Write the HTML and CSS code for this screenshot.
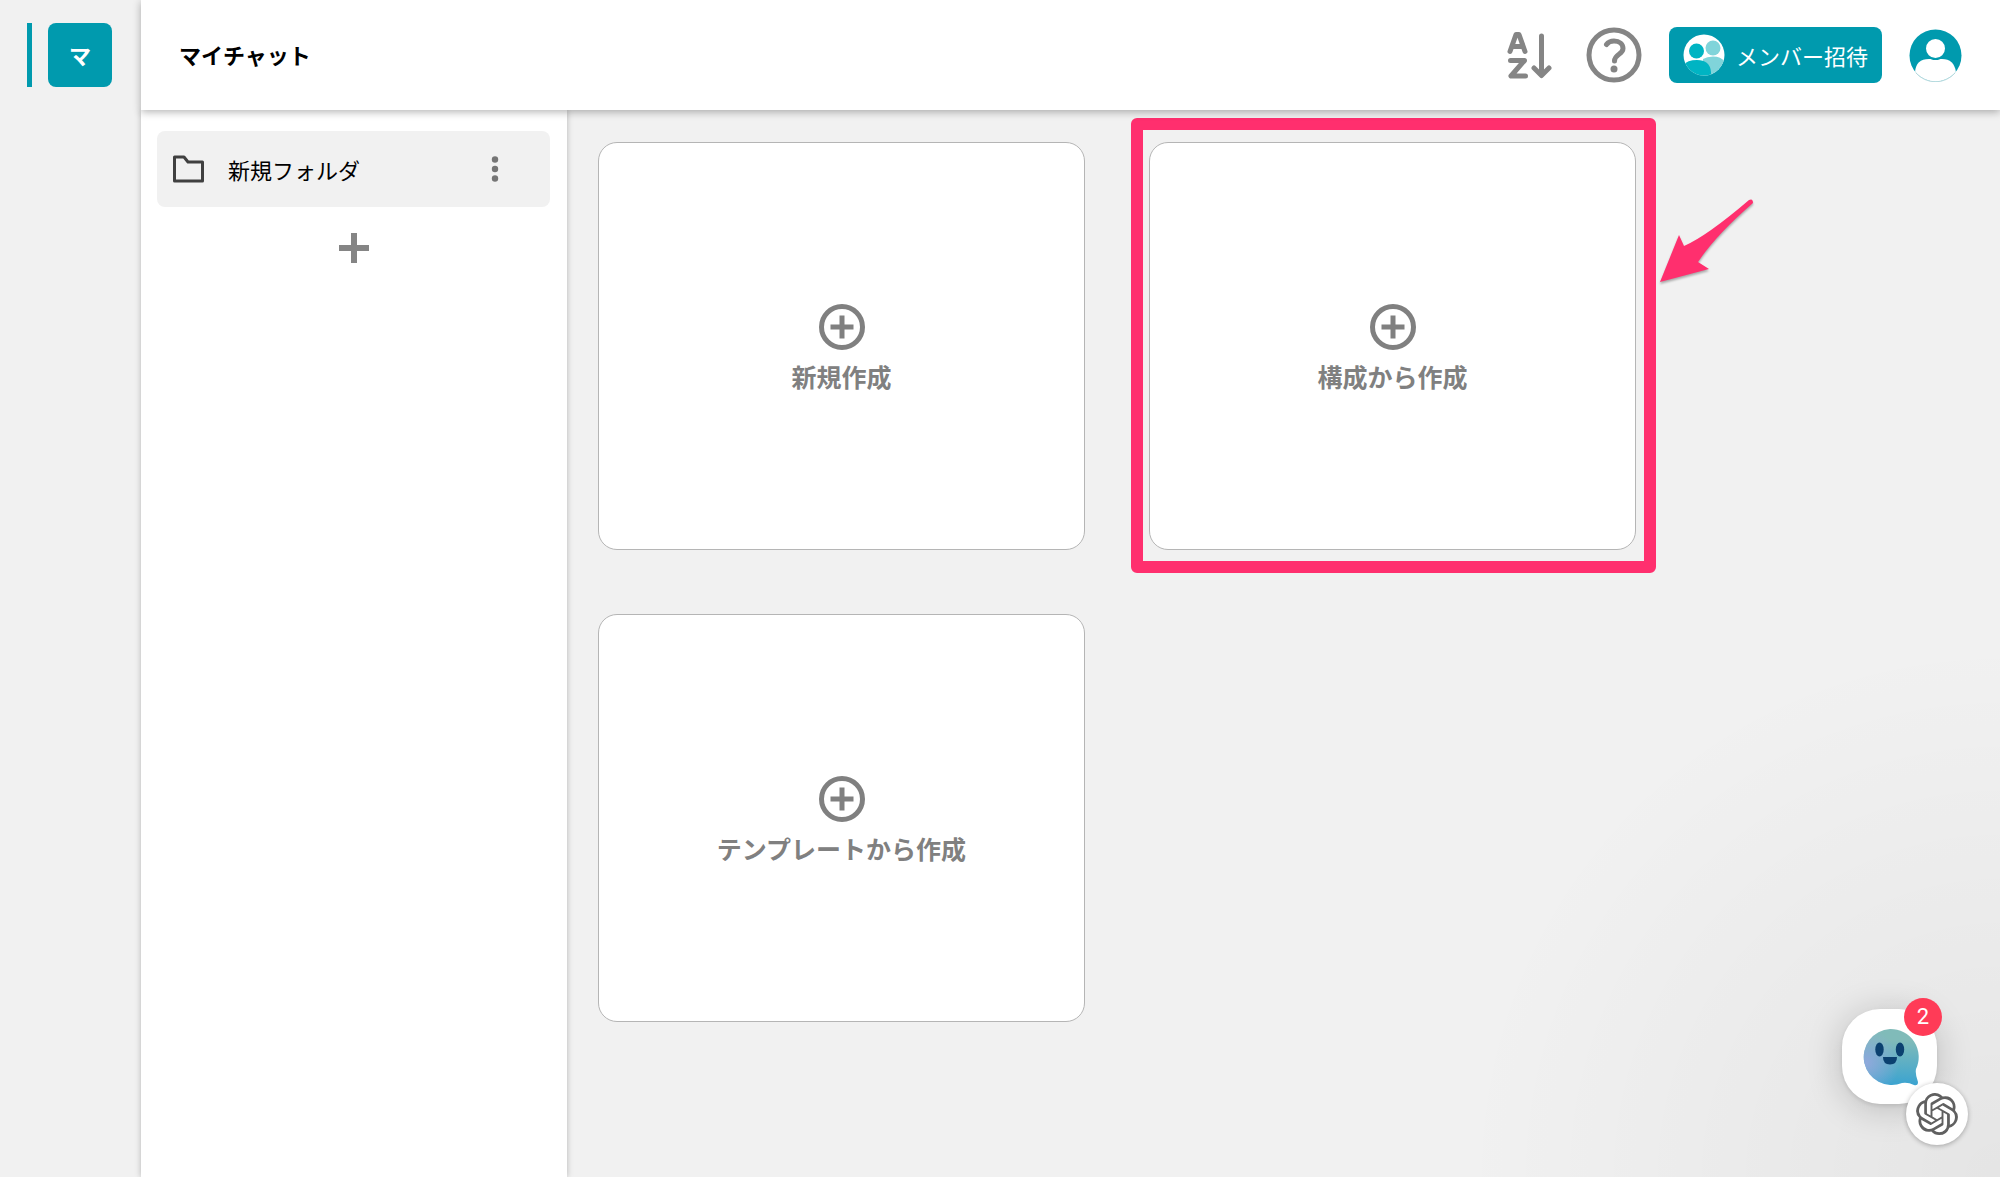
FILE: index.html
```html
<!DOCTYPE html>
<html lang="ja">
<head>
    <meta charset="UTF-8">
    <meta name="viewport" content="width=device-width, initial-scale=1.0">
    <title>マイチャット</title>
    <link rel="stylesheet" href="styles.css">
</head>
<body>
    <nav class="rail">
        <span class="rail-bar"></span>
        <a class="team" href="#">マ</a>
    </nav>
    <div class="page">
        <header class="header">
            <h1>マイチャット</h1>
            <div class="tools">
                <button class="icon-btn" aria-label="並び替え">
                    <svg width="45" height="48" viewBox="0 0 45 48" fill="none" stroke="#858585" stroke-width="5" stroke-linecap="round" stroke-linejoin="round">
                        <path d="M3 20.500L9 3.500h3L18 20.500M6 15.500h9"/>
                        <path d="M3.500 29.500H17.500L4 45H18.500"/>
                        <path d="M34.500 5V44M27 37L34.500 44.500L42 37"/>
                    </svg>
                </button>
                <button class="icon-btn help" aria-label="ヘルプ">
                    <svg width="56" height="56" viewBox="0 0 56 56" fill="none" stroke="#858585" stroke-width="5" stroke-linecap="round">
                        <circle cx="28" cy="28" r="25"/>
                        <path d="M20.500 17.500Q23 14 28 14C33.500 14 37 17 37 21.500C37 27.500 28.500 27 28.500 34"/>
                        <circle cx="28" cy="42" r="3.500" fill="#858585" stroke="none"/>
                    </svg>
                </button>
                <button class="invite">
                    <svg width="42" height="42" viewBox="0 0 42 42">
                        <clipPath id="round"><circle cx="21" cy="21" r="20.500"/></clipPath>
                        <circle cx="21" cy="21" r="20.500" fill="#fff"/>
                        <g clip-path="url(#round)">
                            <circle cx="30" cy="14" r="7.500" fill="#80d4da"/>
                            <path d="M20 25Q24 22.500 30 22.500Q40 22.500 44 31V42H20z" fill="#80d4da"/>
                            <path d="M-1 33Q3 26 14 26Q27 26 28 38V42H-1z" fill="#00b4c3"/>
                            <circle cx="13.500" cy="17" r="9" fill="#fff"/>
                            <circle cx="13.500" cy="17" r="7.500" fill="#00b4c3"/>
                        </g>
                    </svg>
                    メンバー招待
                </button>
                <button class="icon-btn" aria-label="アカウント">
                    <svg width="53" height="53" viewBox="0 0 53 53">
                        <clipPath id="face"><circle cx="26.500" cy="26.500" r="26"/></clipPath>
                        <circle cx="26.500" cy="26.500" r="26" fill="#009aae"/>
                        <g clip-path="url(#face)" fill="#fff">
                            <path d="M6 53V43Q7 30 20 30H33Q45 30 47 43V53z"/>
                            <circle cx="26.500" cy="19.500" r="10.500" stroke="#009aae" stroke-width="2"/>
                        </g>
                        <path d="M7 44A26 26 0 0 0 46 44" fill="none" stroke="#b5d9dd"/>
                    </svg>
                </button>
            </div>
        </header>
        <div class="content">
            <aside class="sidebar">
                <div class="folder">
                    <svg width="31" height="28" viewBox="0 0 31 28" fill="none" stroke="#404040" stroke-width="3" stroke-linejoin="round">
                        <path d="M1.500 2H11L15 7H29.500V26H1.500z"/>
                    </svg>
                    <a href="#">新規フォルダ</a>
                    <button class="icon-btn" aria-label="メニュー">
                        <svg width="8" height="28" viewBox="0 0 8 28" fill="#757575">
                            <circle cx="4" cy="4.500" r="3.200"/><circle cx="4" cy="14" r="3.200"/><circle cx="4" cy="23.500" r="3.200"/>
                        </svg>
                    </button>
                </div>
                <button class="icon-btn add" aria-label="フォルダを追加">
                    <svg width="30" height="30" viewBox="0 0 30 30" stroke="#858585" stroke-width="6">
                        <path d="M15 0V30M0 15H30"/>
                    </svg>
                </button>
            </aside>
            <main class="cards">
                <button class="card">
                    <svg width="46" height="46" viewBox="0 0 46 46" fill="none" stroke="#808080" stroke-width="5">
                        <circle cx="23" cy="23" r="20.500"/><path d="M23 11.500V34.500M11.500 23H34.500"/>
                    </svg>
                    新規作成
                </button>
                <div class="pick">
                    <button class="card">
                        <svg width="46" height="46" viewBox="0 0 46 46" fill="none" stroke="#808080" stroke-width="5">
                            <circle cx="23" cy="23" r="20.500"/><path d="M23 11.500V34.500M11.500 23H34.500"/>
                        </svg>
                        構成から作成
                    </button>
                    <svg class="arrow" width="96" height="86" viewBox="0 0 96 86">
                        <path d="M1 83L20 36L25 47Q48 37 90 1Q94 -1 94 4Q57 36 39 63L50 70z" fill="#ff2f6e"/>
                    </svg>
                </div>
                <button class="card">
                    <svg width="46" height="46" viewBox="0 0 46 46" fill="none" stroke="#808080" stroke-width="5">
                        <circle cx="23" cy="23" r="20.500"/><path d="M23 11.500V34.500M11.500 23H34.500"/>
                    </svg>
                    テンプレートから作成
                </button>
            </main>
        </div>
    </div>
    <div class="chat">
        <button class="bot" aria-label="チャット">
            <svg width="58" height="58" viewBox="0 0 58 58">
                <defs>
                    <linearGradient id="sky" x1="0" y1="0" x2="0" y2="1">
                        <stop offset="0.2" stop-color="#80bbb9"/>
                        <stop offset="1" stop-color="#3ba3d0"/>
                    </linearGradient>
                    <radialGradient id="haze" cx="0.05" cy="0.6" r="0.6">
                        <stop offset="0" stop-color="#8fa9dc"/>
                        <stop offset="1" stop-color="#8fa9dc" stop-opacity="0"/>
                    </radialGradient>
                </defs>
                <path d="M29 1A28 28 0 0 1 55 41Q54 46 57 54Q57 58 53 57Q47 54 41 55A28 28 0 1 1 29 1z" fill="url(#sky)"/>
                <path d="M29 1A28 28 0 0 1 55 41Q54 46 57 54Q57 58 53 57Q47 54 41 55A28 28 0 1 1 29 1z" fill="url(#haze)"/>
                <g fill="#0b4170">
                    <ellipse cx="18.500" cy="21.500" rx="4.200" ry="7"/>
                    <ellipse cx="39" cy="21.500" rx="4.200" ry="7"/>
                    <path d="M22 29H36Q36 36.500 29 36.500Q22 36.500 22 29z"/>
                </g>
            </svg>
        </button>
        <span class="badge">2</span>
        <button class="gpt" aria-label="ChatGPT">
            <svg width="42" height="42" viewBox="0 0 24 24" fill="#606060">
                <path d="M22.2819 9.8211a5.9847 5.9847 0 0 0-.5157-4.9108 6.0462 6.0462 0 0 0-6.5098-2.9A6.0651 6.0651 0 0 0 4.9807 4.1818a5.9847 5.9847 0 0 0-3.9977 2.9 6.0462 6.0462 0 0 0 .7427 7.0966 5.98 5.98 0 0 0 .511 4.9107 6.051 6.051 0 0 0 6.5146 2.9001A5.9847 5.9847 0 0 0 13.2599 24a6.0557 6.0557 0 0 0 5.7718-4.2058 5.9894 5.9894 0 0 0 3.9977-2.9001 6.0557 6.0557 0 0 0-.7475-7.0729zm-9.022 12.6081a4.4755 4.4755 0 0 1-2.8764-1.0408l.1419-.0804 4.7783-2.7582a.7948.7948 0 0 0 .3927-.6813v-6.7369l2.02 1.1686a.071.071 0 0 1 .038.0615v5.5826a4.504 4.504 0 0 1-4.4945 4.4944zm-9.6607-4.1254a4.4708 4.4708 0 0 1-.5346-3.0137l.142.0852 4.783 2.7582a.7712.7712 0 0 0 .7806 0l5.8428-3.3685v2.3324a.0804.0804 0 0 1-.0332.0615L9.74 19.9502a4.4992 4.4992 0 0 1-6.1408-1.6464zM2.3408 7.8956a4.485 4.485 0 0 1 2.3655-1.9728V11.6a.7664.7664 0 0 0 .3879.6765l5.8144 3.3543-2.0201 1.1685a.0757.0757 0 0 1-.071 0l-4.8303-2.7865A4.504 4.504 0 0 1 2.3408 7.872zm16.5963 3.8558L13.1038 8.364 15.1192 7.2a.0757.0757 0 0 1 .071 0l4.8303 2.7913a4.4944 4.4944 0 0 1-.6765 8.1042v-5.6772a.79.79 0 0 0-.407-.667zm2.0107-3.0231l-.142-.0852-4.7735-2.7818a.7759.7759 0 0 0-.7854 0L9.409 9.2297V6.8974a.0662.0662 0 0 1 .0284-.0615l4.8303-2.7866a4.4992 4.4992 0 0 1 6.6802 4.66zM8.3065 12.863l-2.02-1.1638a.0804.0804 0 0 1-.038-.0567V6.0742a4.4992 4.4992 0 0 1 7.3757-3.4537l-.142.0805L8.704 5.459a.7948.7948 0 0 0-.3927.6813zm1.0976-2.3654l2.602-1.4998 2.6069 1.4998v2.9994l-2.5974 1.4997-2.6067-1.4997Z"/>
            </svg>
        </button>
    </div>
</body>
</html>
```

FILE: styles.css
```css
*{
    box-sizing: border-box;
}
body{
    margin: 0;
    min-height: 100vh;
    display: flex;
    background-color: #f1f1f1;
    color: #000;
    font-family: "Noto Sans CJK JP", "Noto Sans", sans-serif;
    font-size: 22px;
}
a{
    color: inherit;
    text-decoration: none;
}
button{
    font: inherit;
    border: 0;
    cursor: pointer;
}
svg{
    display: block;
}
.icon-btn{
    padding: 0;
    background: none;
}

/* left rail */
.rail{
    width: 141px;
    padding: 23px 0 0 27px;
    display: flex;
    align-items: flex-start;
    gap: 16px;
    flex-shrink: 0;
}
.rail-bar{
    width: 5px;
    height: 64px;
    background-color: #009aae;
}
.team{
    width: 64px;
    height: 64px;
    line-height: 62px;
    text-align: center;
    border-radius: 8px;
    background-color: #009aae;
    color: #fff;
    font-weight: bold;
}

.page{
    flex: 1;
    display: flex;
    flex-direction: column;
}

/* header */
.header{
    height: 110px;
    padding: 0 38px;
    display: flex;
    align-items: center;
    justify-content: space-between;
    background-color: #fff;
    box-shadow: 0 2px 8px rgba(0, 0, 0, 0.3);
    position: relative;
    z-index: 1;
}
.header h1{
    margin: 0;
    padding-bottom: 2px;
    font-size: 22px;
}
.tools{
    display: flex;
    align-items: center;
    gap: 27px;
}
.help{
    margin-left: 7px;
}
.invite{
    height: 56px;
    padding: 0 14px;
    display: flex;
    align-items: center;
    gap: 11px;
    border-radius: 8px;
    background-color: #009aae;
    color: #fff;
}

/* folders */
.content{
    flex: 1;
    display: flex;
}
.sidebar{
    width: 426px;
    padding: 21px 17px 21px 16px;
    flex-shrink: 0;
    background-color: #fff;
    box-shadow: 0 0 6px rgba(0, 0, 0, 0.25);
}
.folder{
    height: 76px;
    padding: 0 51px 0 16px;
    display: flex;
    align-items: center;
    gap: 24px;
    border-radius: 8px;
    background-color: #f1f1f1;
}
.folder a{
    flex: 1;
}
.add{
    margin: 26px auto 0;
    display: block;
}

/* cards */
.cards{
    flex: 1;
    padding: 32px 31px;
    display: grid;
    grid-template-columns: repeat(auto-fill, 487px);
    align-content: start;
    gap: 64px;
    background-image: radial-gradient(circle 540px at 100% 100%, rgba(0, 0, 0, 0.05), transparent);
}
.card{
    width: 100%;
    height: 408px;
    padding-top: 6px;
    display: flex;
    flex-direction: column;
    align-items: center;
    justify-content: center;
    gap: 8px;
    border: 1px solid #b5b5b5;
    border-radius: 19px;
    background-color: #fff;
    color: #808080;
    font-size: 25px;
    font-weight: bold;
}
.pick{
    position: relative;
}
.pick::before{
    content: "";
    position: absolute;
    inset: -24px -20px -23px -18px;
    border: 12px solid #ff2f6e;
    border-radius: 6px;
    pointer-events: none;
}
.arrow{
    position: absolute;
    left: 510px;
    top: 57px;
    filter: drop-shadow(0 2px 1px rgba(0, 0, 0, 0.3));
}

/* chat launcher */
.chat{
    position: fixed;
    right: 63px;
    bottom: 73px;
}
.bot{
    width: 95px;
    height: 95px;
    padding: 0;
    display: grid;
    place-items: center;
    border-radius: 38px;
    background-color: #fff;
    box-shadow: 0 4px 36px rgba(0, 0, 0, 0.2), 0 2px 4px rgba(0, 0, 0, 0.1);
}
.badge{
    position: absolute;
    top: -11px;
    right: -5px;
    width: 38px;
    height: 38px;
    line-height: 38px;
    text-align: center;
    border-radius: 50%;
    background-color: #ff3b57;
    color: #fff;
    font-family: Roboto, sans-serif;
}
.gpt{
    position: absolute;
    left: 64px;
    top: 74px;
    width: 62px;
    height: 62px;
    padding: 0;
    display: grid;
    place-items: center;
    border-radius: 50%;
    background-color: #fff;
    box-shadow: 0 1px 5px rgba(0, 0, 0, 0.3);
}
```
